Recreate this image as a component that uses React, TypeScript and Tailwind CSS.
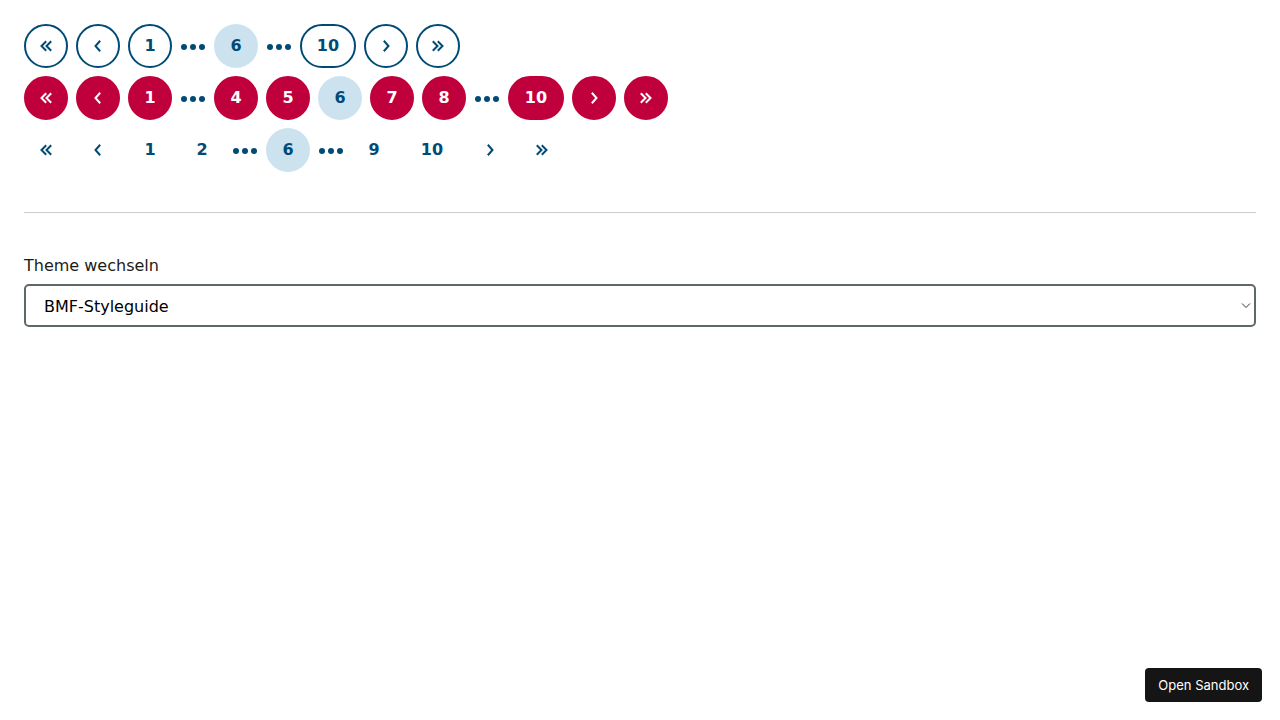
import React from 'react';

type Variant = 'outline' | 'filled' | 'plain';

const Chevron: React.FC<{ dir: 'left' | 'right'; double?: boolean }> = ({ dir, double }) => {
  const flip = dir === 'right' ? 'scale(-1,1) translate(-14,0)' : undefined;
  return (
    <svg width="14" height="12" viewBox="0 0 14 12" fill="none" stroke="currentColor" strokeWidth="2" strokeLinecap="square" strokeLinejoin="miter">
      <g transform={flip}>
        {double ? (
          <>
            <path d="M6.5 2 L2.5 6 L6.5 10" />
            <path d="M11.5 2 L7.5 6 L11.5 10" />
          </>
        ) : (
          <path d="M8.5 1.5 L4.5 6 L8.5 10.5" />
        )}
      </g>
    </svg>
  );
};

const Dots: React.FC = () => (
  <span className="flex h-11 w-[26px] items-center justify-center gap-[3px] pt-[2px]">
    <span className="h-[6px] w-[6px] rounded-full bg-[#004b76]" />
    <span className="h-[6px] w-[6px] rounded-full bg-[#004b76]" />
    <span className="h-[6px] w-[6px] rounded-full bg-[#004b76]" />
  </span>
);

const PageButton: React.FC<{ variant: Variant; current?: boolean; wide?: boolean; children: React.ReactNode }> = ({
  variant,
  current,
  wide,
  children,
}) => {
  let cls = '';
  if (current) cls = 'bg-[#cce3ef] text-[#004b76] border-2 border-transparent';
  else if (variant === 'outline') cls = 'border-2 border-[#004b76] text-[#004b76] bg-white';
  else if (variant === 'filled') cls = 'border-2 border-[#c0003c] bg-[#c0003c] text-white';
  else cls = 'border-2 border-transparent text-[#004b76]';
  return (
    <button
      className={`flex h-11 shrink-0 items-center justify-center rounded-full text-base font-bold leading-none ${wide ? 'w-14' : 'w-11'} ${cls}`}
    >
      {children}
    </button>
  );
};

type Item = { t: 'first' | 'prev' | 'next' | 'last' | 'dots' } | { t: 'page'; n: number; current?: boolean };

const Pagination: React.FC<{ variant: Variant; items: Item[] }> = ({ variant, items }) => (
  <nav className="flex items-center gap-2">
    {items.map((it, i) => {
      if (it.t === 'dots') return <Dots key={i} />;
      if (it.t === 'page')
        return (
          <PageButton key={i} variant={variant} current={it.current} wide={it.n >= 10}>
            {it.n}
          </PageButton>
        );
      return (
        <PageButton key={i} variant={variant}>
          <Chevron dir={it.t === 'first' || it.t === 'prev' ? 'left' : 'right'} double={it.t === 'first' || it.t === 'last'} />
        </PageButton>
      );
    })}
  </nav>
);

const pages = (nums: (number | '...')[], current: number): Item[] => [
  { t: 'first' },
  { t: 'prev' },
  ...nums.map((n): Item => (n === '...' ? { t: 'dots' } : { t: 'page', n, current: n === current })),
  { t: 'next' },
  { t: 'last' },
];

const App: React.FC = () => {
  return (
    <div className="min-h-screen bg-white p-6 font-['DejaVu_Sans',Verdana,sans-serif]">
      <div className="flex flex-col gap-2">
        <Pagination variant="outline" items={pages([1, '...', 6, '...', 10], 6)} />
        <Pagination variant="filled" items={pages([1, '...', 4, 5, 6, 7, 8, '...', 10], 6)} />
        <Pagination variant="plain" items={pages([1, 2, '...', 6, '...', 9, 10], 6)} />
      </div>

      <hr className="mt-10 border-t border-[#cccccc]" />

      <label className="mt-[41px] block text-base leading-6 text-[#1b1b1b]">Theme wechseln</label>
      <div className="relative mt-[6px]">
        <select className="h-[43px] w-full appearance-none rounded-[5px] border-2 border-[#5f6869] bg-white pl-[18px] pt-[3px] text-base text-black outline-none">
          <option>BMF-Styleguide</option>
        </select>
        <svg className="pointer-events-none absolute right-[5px] top-[19px]" width="10" height="6" viewBox="0 0 10 6" fill="none" stroke="#333" strokeWidth="1">
          <path d="M1 0.5 L5 4.5 L9 0.5" />
        </svg>
      </div>

      <button className="fixed bottom-[18px] right-[18px] rounded-[4px] bg-[#151515] px-[13px] py-[8px] font-['Inter',sans-serif] text-[13px] leading-[18px] text-white">
        Open Sandbox
      </button>
    </div>
  );
};

export default App;
